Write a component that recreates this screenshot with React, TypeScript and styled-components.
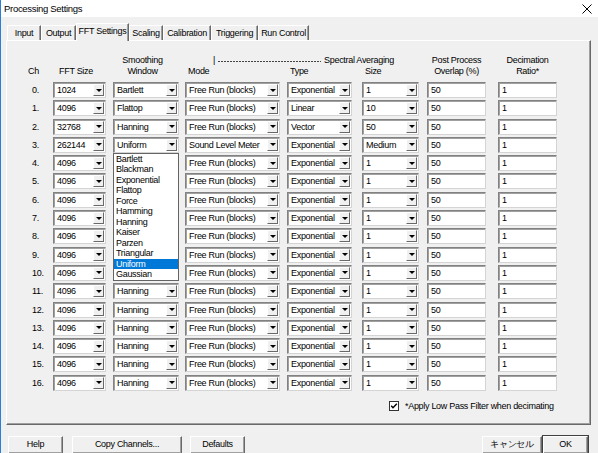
import styled, { createGlobalStyle } from 'styled-components';

const GlobalStyle = createGlobalStyle`
  html, body {
    margin: 0;
    padding: 0;
    background: #f0f0f0;
  }
  body {
    font-family: "Liberation Sans", Arial, sans-serif;
    font-size: 9px;
    letter-spacing: -0.3px;
    color: #000;
  }
`;

const Window = styled.div`
  width: 598px;
  height: 453px;
  overflow: hidden;
  box-sizing: border-box;
  border-left: 1px solid #2b7fd6;
  background: #f0f0f0;
  display: flex;
  flex-direction: column;
`;

const TitleBar = styled.div`
  height: 17px;
  flex: none;
  background: #fff;
  display: flex;
  align-items: center;
  justify-content: space-between;
  padding: 0 6px 0 3px;
  font-size: 9.5px;
`;

const TabStrip = styled.div`
  height: 18px;
  margin-top: 5px;
  padding-left: 6px;
  display: flex;
  align-items: flex-end;
  flex: none;
  position: relative;
  z-index: 2;
`;

const Tab = styled.div<{ $w: number; $active?: boolean }>`
  width: ${p => p.$w}px;
  height: ${p => (p.$active ? 18 : 15)}px;
  margin-bottom: ${p => (p.$active ? -1 : 0)}px;
  box-sizing: border-box;
  background: #f0f0f0;
  border-top: 1px solid #fff;
  border-left: 1px solid #fff;
  border-right: 1px solid #696969;
  box-shadow: inset -1px 0 0 #a0a0a0;
  display: flex;
  align-items: center;
  justify-content: center;
  padding-bottom: ${p => (p.$active ? 3 : 0)}px;
  white-space: nowrap;
`;

const Panel = styled.div`
  width: 585px;
  height: 385px;
  margin-left: 5px;
  box-sizing: border-box;
  flex: none;
  border-top: 1px solid #fff;
  border-left: 1px solid #fff;
  border-right: 1px solid #696969;
  border-bottom: 1px solid #696969;
  box-shadow: inset -1px -1px 0 #a0a0a0;
  padding-top: 14px;
`;

const columns = '33px 66px 73px 101px 72px 67px 67px 71px';

const Header = styled.div`
  display: grid;
  grid-template-columns: ${columns};
  grid-auto-rows: 11px;
  line-height: 11px;
  margin-bottom: 5px;
`;

const HeadCell = styled.div<{ $col: number; $row: number; $pad?: number; $center?: boolean }>`
  grid-column: ${p => p.$col};
  grid-row: ${p => p.$row};
  padding-left: ${p => p.$pad ?? 0}px;
  text-align: ${p => (p.$center ? 'center' : 'left')};
  white-space: nowrap;
`;

const SpectralLine = styled.div`
  grid-column: 4 / span 3;
  grid-row: 1;
  display: flex;
  align-items: center;
  min-width: 0;
  padding-left: 34px;
  padding-right: 25px;
  white-space: nowrap;
`;

const Dashes = styled.div`
  flex: 1;
  height: 1px;
  margin: 1px 3px 0 3px;
  background: repeating-linear-gradient(to right, #444 0 2px, transparent 2px 3px);
`;

const Grid = styled.div`
  display: grid;
  grid-template-columns: ${columns};
  grid-auto-rows: 18.3px;
`;

const ChLabel = styled.div`
  padding-left: 25px;
  line-height: 16px;
  white-space: nowrap;
`;

const Cell = styled.div`
  display: flex;
  justify-content: flex-end;
  position: relative;
`;

const Field = styled.div<{ $w: number }>`
  width: ${p => p.$w}px;
  height: 16px;
  box-sizing: border-box;
  background: #fff;
  border: 1px solid;
  border-color: #828282 #d4d4d4 #d4d4d4 #828282;
  box-shadow: inset 1px 1px 0 #a0a0a0;
  display: flex;
  align-items: center;
  padding-left: 3px;
  white-space: nowrap;
  overflow: hidden;
`;

const FieldText = styled.span`
  flex: 1;
  min-width: 0;
  overflow: hidden;
`;

const ArrowButton = styled.div`
  width: 11px;
  height: 12px;
  flex: none;
  margin-right: 1px;
  box-sizing: border-box;
  background: #f0f0f0;
  border: 1px solid;
  border-color: #fff #696969 #696969 #fff;
  display: flex;
  align-items: center;
  justify-content: center;

  &::after {
    content: '';
    width: 0;
    height: 0;
    border-left: 3px solid transparent;
    border-right: 3px solid transparent;
    border-top: 3px solid #000;
  }
`;

const ListBox = styled.div`
  position: absolute;
  top: 16px;
  right: 0;
  width: 66px;
  box-sizing: border-box;
  background: #fff;
  border: 1px solid #646464;
  z-index: 5;
`;

const ListItem = styled.div<{ $selected?: boolean }>`
  height: 10.5px;
  line-height: 10.5px;
  padding-left: 2px;
  white-space: nowrap;
  background: ${p => (p.$selected ? '#0078d7' : 'transparent')};
  color: ${p => (p.$selected ? '#fff' : '#000')};
`;

const CheckRow = styled.div`
  display: flex;
  align-items: center;
  gap: 6px;
  margin-top: 7px;
  padding-left: 382px;
  height: 11px;
`;

const ButtonBar = styled.div`
  display: flex;
  margin-top: 11px;
  padding: 0 10px 0 7px;
  flex: none;
`;

const Button = styled.div<{ $w: number; $gap?: number; $default?: boolean }>`
  width: ${p => p.$w}px;
  height: 18px;
  margin-left: ${p => p.$gap ?? 0}px;
  box-sizing: border-box;
  background: #f0f0f0;
  border: 1px solid;
  border-color: #fff #696969 #696969 #fff;
  box-shadow: inset -1px -1px 0 #a0a0a0;
  display: flex;
  align-items: center;
  justify-content: center;
  padding-bottom: 2px;
  white-space: nowrap;
  outline: ${p => (p.$default ? '1px solid #404040' : 'none')};
`;

const Spacer = styled.div`
  flex: 1;
`;

const tabs = [
  { label: 'Input', w: 34 },
  { label: 'Output', w: 35 },
  { label: 'FFT Settings', w: 53, active: true },
  { label: 'Scaling', w: 34 },
  { label: 'Calibration', w: 48 },
  { label: 'Triggering', w: 47 },
  { label: 'Run Control', w: 51 },
];

const windowOptions = [
  'Bartlett', 'Blackman', 'Exponential', 'Flattop', 'Force', 'Hamming',
  'Hanning', 'Kaiser', 'Parzen', 'Triangular', 'Uniform', 'Gaussian',
];

type RowData = { fft: string; win: string; mode: string; type: string; size: string };

// rows 4-10 of the window column sit under the open list, so they show no text
const rows: RowData[] = Array.from({ length: 17 }, (_, i) => ({
  fft: ['1024', '4096', '32768', '262144'][i] ?? '4096',
  win: ['Bartlett', 'Flattop', 'Hanning', 'Uniform'][i] ?? (i > 3 && i < 11 ? '' : 'Hanning'),
  mode: i === 3 ? 'Sound Level Meter' : 'Free Run (blocks)',
  type: ['Exponential', 'Linear', 'Vector', 'Exponential'][i] ?? 'Exponential',
  size: ['1', '10', '50', 'Medium'][i] ?? '1',
}));

function Combo({ w, value }: { w: number; value: string }) {
  return (
    <Field $w={w}>
      <FieldText>{value}</FieldText>
      <ArrowButton />
    </Field>
  );
}

function CloseIcon() {
  return (
    <svg width="10" height="10" viewBox="0 0 10 10">
      <path d="M0.5 0.5 L9.5 9.5 M9.5 0.5 L0.5 9.5" stroke="#000" strokeWidth="1" />
    </svg>
  );
}

function CheckBox() {
  return (
    <svg width="10" height="10" viewBox="0 0 10 10">
      <rect x="0.5" y="0.5" width="9" height="9" fill="#fff" stroke="#333" />
      <path d="M2.2 4.8 L4 6.8 L7.8 2.8" stroke="#000" strokeWidth="1.4" fill="none" />
    </svg>
  );
}

export default function App() {
  return (
    <>
      <GlobalStyle />
      <Window>
        <TitleBar>
          <span>Processing Settings</span>
          <CloseIcon />
        </TitleBar>
        <TabStrip>
          {tabs.map(t => (
            <Tab key={t.label} $w={t.w} $active={t.active}>{t.label}</Tab>
          ))}
        </TabStrip>
        <Panel>
          <Header>
            <HeadCell $col={1} $row={2} $pad={21}>Ch</HeadCell>
            <HeadCell $col={2} $row={2} $pad={19}>FFT Size</HeadCell>
            <HeadCell $col={3} $row={1} $center>Smoothing</HeadCell>
            <HeadCell $col={3} $row={2} $center>Window</HeadCell>
            <SpectralLine>
              <span>|</span>
              <Dashes />
              <span>Spectral Averaging</span>
            </SpectralLine>
            <HeadCell $col={4} $row={2} $pad={9}>Mode</HeadCell>
            <HeadCell $col={5} $row={2} $pad={10}>Type</HeadCell>
            <HeadCell $col={6} $row={2} $pad={13}>Size</HeadCell>
            <HeadCell $col={7} $row={1} $pad={8} $center>Post Process</HeadCell>
            <HeadCell $col={7} $row={2} $pad={8} $center>Overlap (%)</HeadCell>
            <HeadCell $col={8} $row={1} $pad={12} $center>Decimation</HeadCell>
            <HeadCell $col={8} $row={2} $pad={12} $center>Ratio*</HeadCell>
          </Header>
          <Grid>
            {rows.map((r, i) => (
              <>
                <ChLabel key={`c${i}`}>{i}.</ChLabel>
                <Cell key={`f${i}`}><Combo w={53} value={r.fft} /></Cell>
                <Cell key={`w${i}`}>
                  <Combo w={66} value={r.win} />
                  {i === 3 && (
                    <ListBox>
                      {windowOptions.map(o => (
                        <ListItem key={o} $selected={o === 'Uniform'}>{o}</ListItem>
                      ))}
                    </ListBox>
                  )}
                </Cell>
                <Cell key={`m${i}`}><Combo w={95} value={r.mode} /></Cell>
                <Cell key={`t${i}`}><Combo w={65} value={r.type} /></Cell>
                <Cell key={`s${i}`}><Combo w={57} value={r.size} /></Cell>
                <Cell key={`p${i}`}><Field $w={59}>50</Field></Cell>
                <Cell key={`d${i}`}><Field $w={59}>1</Field></Cell>
              </>
            ))}
          </Grid>
          <CheckRow>
            <CheckBox />
            <span>*Apply Low Pass Filter when decimating</span>
          </CheckRow>
        </Panel>
        <ButtonBar>
          <Button $w={55}>Help</Button>
          <Button $w={110} $gap={9}>Copy Channels...</Button>
          <Button $w={55} $gap={8}>Defaults</Button>
          <Spacer />
          <Button $w={60}>キャンセル</Button>
          <Button $w={45} $gap={1} $default>OK</Button>
        </ButtonBar>
      </Window>
    </>
  );
}
